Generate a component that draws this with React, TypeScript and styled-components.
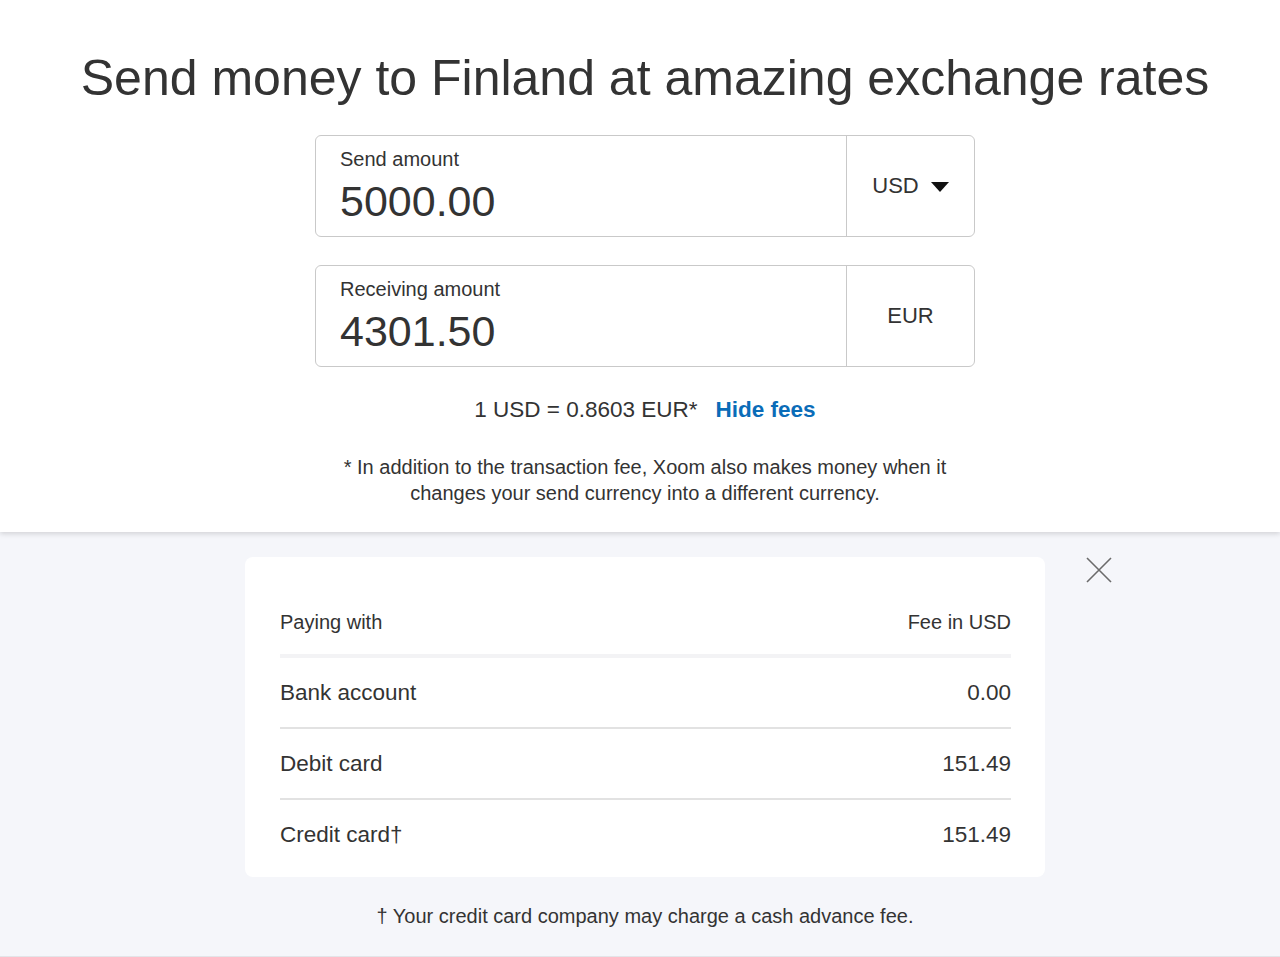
import styled, { createGlobalStyle } from 'styled-components';

const GlobalStyle = createGlobalStyle`
  html, body {
    margin: 0;
    padding: 0;
    background: #f5f6fa;
    font-family: "Liberation Sans", Arial, sans-serif;
    color: #333;
  }
`;

const Page = styled.div`
  width: 1280px;
  height: 957px;
  overflow: hidden;
  display: flex;
  flex-direction: column;
`;

const TopSection = styled.section`
  background: #fff;
  padding: 48px 0 26px 10px;
  display: flex;
  flex-direction: column;
  align-items: center;
  box-shadow: 0 2px 5px rgba(0, 0, 0, 0.14);
  position: relative;
  z-index: 1;
`;

const Title = styled.h1`
  margin: 0;
  font-size: 50px;
  line-height: 60px;
  font-weight: 400;
  color: #333;
`;

const AmountBox = styled.div<{ $first?: boolean }>`
  width: 660px;
  height: 102px;
  box-sizing: border-box;
  margin-top: ${(p) => (p.$first ? '27px' : '28px')};
  border: 1px solid #c9c9c9;
  border-radius: 6px;
  display: flex;
  overflow: hidden;
`;

const AmountField = styled.div`
  flex: 1;
  padding: 11px 24px 0;
  border-right: 1px solid #c9c9c9;
`;

const FieldLabel = styled.div`
  font-size: 20px;
  line-height: 24px;
  color: #333;
`;

const FieldValue = styled.div`
  margin-top: 6px;
  font-size: 43px;
  line-height: 48px;
  color: #333;
`;

const CurrencyCell = styled.div`
  width: 127px;
  display: flex;
  align-items: center;
  justify-content: center;
  gap: 12px;
  font-size: 22px;
  color: #333;
`;

const Caret = styled.span`
  width: 0;
  height: 0;
  border-left: 9px solid transparent;
  border-right: 9px solid transparent;
  border-top: 10px solid #111;
  margin-top: 1px;
`;

const RateLine = styled.div`
  margin-top: 28px;
  font-size: 22.5px;
  line-height: 30px;
  display: flex;
  gap: 18px;
`;

const HideFees = styled.a`
  color: #0a6cb8;
  font-weight: 700;
  text-decoration: none;
  cursor: pointer;
`;

const Disclaimer = styled.p`
  margin: 29px 0 0;
  width: 640px;
  text-align: center;
  font-size: 20px;
  line-height: 26px;
  color: #333;
`;

const FeeSection = styled.section`
  flex: 1;
  background: #f5f6fa;
  padding: 25px 0 24px 10px;
  display: flex;
  flex-direction: column;
  align-items: center;
  border-bottom: 1px solid #e3e4e8;
`;

const CardWrap = styled.div`
  position: relative;
`;

const FeeCard = styled.div`
  width: 800px;
  box-sizing: border-box;
  background: #fff;
  border-radius: 8px;
  padding: 41px 34px 8px 35px;
`;

const CloseButton = styled.button`
  position: absolute;
  top: -1px;
  right: -68px;
  width: 28px;
  height: 28px;
  padding: 0;
  border: none;
  background: transparent;
  cursor: pointer;
`;

const HeaderRow = styled.div`
  height: 60px;
  box-sizing: border-box;
  padding-bottom: 8px;
  display: flex;
  align-items: center;
  justify-content: space-between;
  font-size: 20px;
  color: #333;
  border-bottom: 4px solid #f3f3f5;
`;

const FeeRow = styled.div<{ $last?: boolean }>`
  height: 69px;
  display: flex;
  align-items: center;
  justify-content: space-between;
  font-size: 22.5px;
  color: #333;
  border-bottom: ${(p) => (p.$last ? 'none' : '2px solid #e2e2e2')};
`;

const CardNote = styled.p`
  margin: 27px 0 0;
  font-size: 20px;
  line-height: 24px;
  color: #333;
`;

const fees = [
  { method: 'Bank account', fee: '0.00' },
  { method: 'Debit card', fee: '151.49' },
  { method: 'Credit card†', fee: '151.49' },
];

export default function App() {
  return (
    <Page>
      <GlobalStyle />
      <TopSection>
        <Title>Send money to Finland at amazing exchange rates</Title>
        <AmountBox $first>
          <AmountField>
            <FieldLabel>Send amount</FieldLabel>
            <FieldValue>5000.00</FieldValue>
          </AmountField>
          <CurrencyCell>
            USD <Caret />
          </CurrencyCell>
        </AmountBox>
        <AmountBox>
          <AmountField>
            <FieldLabel>Receiving amount</FieldLabel>
            <FieldValue>4301.50</FieldValue>
          </AmountField>
          <CurrencyCell>EUR</CurrencyCell>
        </AmountBox>
        <RateLine>
          <span>1 USD = 0.8603 EUR*</span>
          <HideFees>Hide fees</HideFees>
        </RateLine>
        <Disclaimer>
          * In addition to the transaction fee, Xoom also makes money when it changes your send
          currency into a different currency.
        </Disclaimer>
      </TopSection>
      <FeeSection>
        <CardWrap>
          <FeeCard>
            <HeaderRow>
              <span>Paying with</span>
              <span>Fee in USD</span>
            </HeaderRow>
            {fees.map((f, i) => (
              <FeeRow key={f.method} $last={i === fees.length - 1}>
                <span>{f.method}</span>
                <span>{f.fee}</span>
              </FeeRow>
            ))}
          </FeeCard>
          <CloseButton aria-label="Close">
            <svg width="28" height="28" viewBox="0 0 28 28">
              <path d="M2 2 L26 26 M26 2 L2 26" stroke="#6b6b6b" strokeWidth="1.6" fill="none" />
            </svg>
          </CloseButton>
        </CardWrap>
        <CardNote>† Your credit card company may charge a cash advance fee.</CardNote>
      </FeeSection>
    </Page>
  );
}
